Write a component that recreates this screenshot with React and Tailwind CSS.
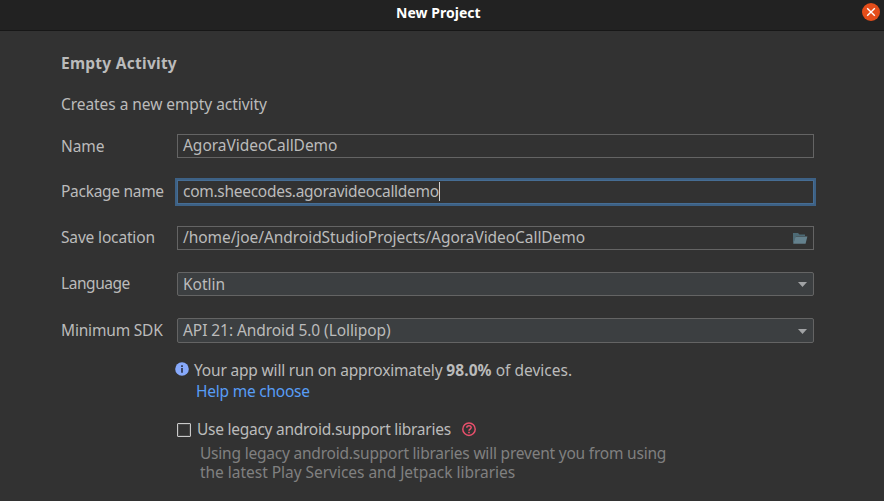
function Row({ label, labelClass, children, className }) {
  return (
    <div className={`flex items-start ${className}`}>
      <label className={`w-[116px] shrink-0 ${labelClass}`}>{label}</label>
      {children}
    </div>
  );
}

function Arrow({ className }) {
  return (
    <svg className={className} width="10" height="6" viewBox="0 0 10 6">
      <path d="M1 0h9L5.5 5z" fill="#a1a3a5" />
    </svg>
  );
}

export default function App() {
  return (
    <div className="h-[501px] w-[884px] overflow-hidden bg-[#323232] font-['Noto_Sans',sans-serif] text-[15.5px] leading-5 whitespace-nowrap text-[#bbbbbb]">
      <header className="flex h-[31px] items-start border-b border-[#171717] bg-[#222222]">
        <div className="w-[396px]" />
        <h1 className="w-[466px] pt-[3px] text-[14px] font-bold tracking-[0.03px] text-white">New Project</h1>
        <button className="mt-[3px] h-[18px] w-[18px]" aria-label="Close">
          <svg width="18" height="18" viewBox="0 0 18 18">
            <circle cx="9" cy="9" r="9" fill="#e44d1a" />
            <path d="M5.2 5.2l7.6 7.6M12.8 5.2l-7.6 7.6" stroke="#fff" strokeWidth="1.4" />
          </svg>
        </button>
      </header>

      <main className="pl-[61px]">
        <h2 className="pt-[22px] font-bold tracking-[0.26px]">Empty Activity</h2>
        <p className="mt-[21px] tracking-[-0.06px]">Creates a new empty activity</p>

        <Row label="Name" labelClass="pt-0.5 tracking-[-0.1px]" className="mt-5 h-6">
          <div className="h-6 w-[637px] border border-[#646464] pl-[5px] tracking-[-0.03px]">AgoraVideoCallDemo</div>
        </Row>
        <Row label="Package name" labelClass="pt-[3px] tracking-[-0.29px]" className="mt-5 h-7">
          <div className="-ml-0.5 h-7 w-[641px] border-2 border-[#3d6185]">
            <div className="flex h-6 border border-[#466d94] pl-[5px]">
              <span className="tracking-[-0.28px]">com.sheecodes.agoravideocalldemo</span>
              <span className="mt-px h-[19px] w-px bg-[#d0d0d0]" />
            </div>
          </div>
        </Row>
        <Row label="Save location" labelClass="pt-px tracking-[-0.16px]" className="mt-5 h-6">
          <div className="flex h-6 w-[637px] justify-between border border-[#646464] pr-[5px] pl-[5px]">
            <span className="tracking-[-0.06px]">/home/joe/AndroidStudioProjects/AgoraVideoCallDemo</span>
            <svg className="mt-[5px]" width="16" height="13" viewBox="0 0 16 13">
              <path d="M1 11.5V1h5l1.5 1.5H13V4H4L2 10z" fill="#4d6a75" />
              <path d="M3.6 4.6h11.8l-1.8 7.2H1.2z" fill="#64818d" />
            </svg>
          </div>
        </Row>
        <Row label="Language" labelClass="pt-px tracking-[-0.45px]" className="mt-[22px] h-6">
          <div className="flex h-6 w-[637px] justify-between rounded-[2px] border border-[#646464] bg-[#3c3f41] pt-px pr-[6px] pl-[5px]">
            <span>Kotlin</span>
            <Arrow className="mt-2" />
          </div>
        </Row>
        <Row label="Minimum SDK" labelClass="pt-[2px] tracking-[-0.18px]" className="mt-[22px] h-[25px]">
          <div className="flex h-[25px] w-[637px] justify-between rounded-[2px] border border-[#646464] bg-[#3c3f41] pt-px pr-[6px] pl-[5px]">
            <span className="tracking-[-0.07px]">API 21: Android 5.0 (Lollipop)</span>
            <Arrow className="mt-[9px]" />
          </div>
        </Row>

        <div className="mt-[17px] flex pl-[114px]">
          <svg className="mt-[2px] mr-[5px]" width="14" height="14" viewBox="0 0 14 14">
            <circle cx="7" cy="7" r="6.8" fill="#87a9fb" />
            <path d="M6.1 3.2h1.8v1.8H6.1zM6.1 6h1.8v4.8H6.1z" fill="#323a55" />
          </svg>
          <p>
            <span className="tracking-[-0.18px]">Your app will run on approximately </span>
            <b className="tracking-[0.1px]">98.0%</b>
            <span> of devices.</span>
          </p>
        </div>
        <a className="mt-px block pl-[135px] tracking-[-0.23px] text-[#589df6]">Help me choose</a>

        <div className="mt-[18px] flex pl-[116px]">
          <span className="mt-1 mr-[6px] flex h-[14px] w-[14px] rounded-[1px] border border-[#c9c9c9] ring-1 ring-[#c9c9c9]/15 ring-inset" />
          <span className="w-[264px] tracking-[-0.26px]">Use legacy android.support libraries</span>
          <svg className="mt-[3px]" width="15" height="15" viewBox="0 0 15 15" fill="none" stroke="#e8506c">
            <circle cx="8" cy="7.2" r="6.2" strokeWidth="1.5" />
            <path d="M5.8 5.8C5.8 3 10.2 3.1 10.2 5.6C10.2 7.1 8 7 8 8.8" strokeWidth="1.5" />
            <path d="M8 9.8v1.5" strokeWidth="1.6" />
          </svg>
        </div>
        <p className="mt-[5px] pl-[139px] leading-[19px] text-[#808080]">
          <span className="tracking-[-0.21px]">Using legacy android.support libraries will prevent you from using</span>
          <br />
          <span className="tracking-[-0.03px]">the latest Play Services and Jetpack libraries</span>
        </p>
      </main>
    </div>
  );
}
